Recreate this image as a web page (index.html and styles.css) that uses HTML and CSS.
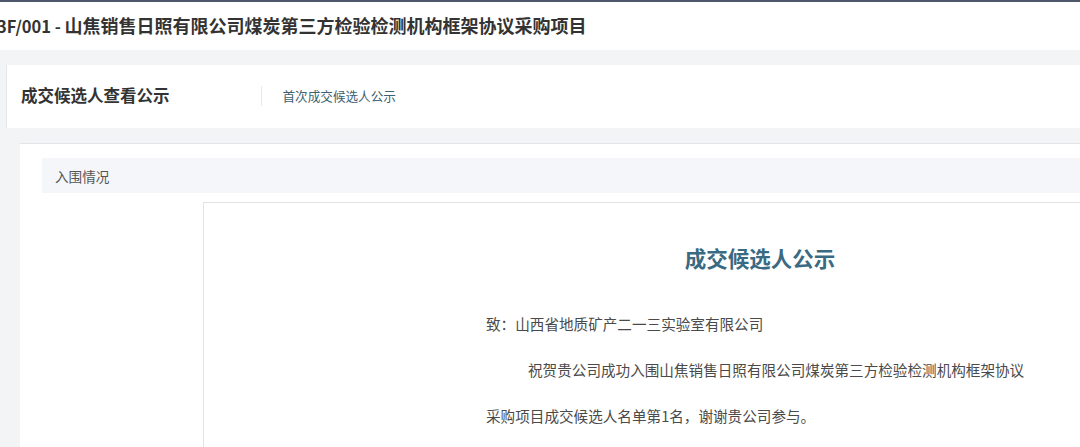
FILE: index.html
```html
<!DOCTYPE html>
<html lang="zh-CN">
    <head>
        <meta charset="UTF-8" />
        <meta name="viewport" content="width=device-width, initial-scale=1.0" />
        <title>成交候选人查看公示</title>
        <link rel="stylesheet" href="styles.css">
    </head>
    <body>
        <div class="topbar"></div>
        <div class="page-title">
            <span class="code">3F/001 - </span>山焦销售日照有限公司煤炭第三方检验检测机构框架协议采购项目
        </div>

        <div class="main">
            <div class="card">
                <h2>成交候选人查看公示</h2>
                <span class="divider"></span>
                <a class="tab" href="#">首次成交候选人公示</a>
            </div>

            <div class="content">
                <div class="section-bar">入围情况</div>
                <div class="notice">
                    <div class="notice-body">
                        <h3>成交候选人公示</h3>
                        <p>致：山西省地质矿产二一三实验室有限公司</p>
                        <p class="indent">祝贺贵公司成功入围山焦销售日照有限公司煤炭第三方检验检测机构框架协议采购项目成交候选人名单第1名，谢谢贵公司参与。</p>
                    </div>
                </div>
            </div>
        </div>
    </body>
</html>
```

FILE: styles.css
```css
* {
    margin: 0;
    padding: 0;
    box-sizing: border-box;
}
html,
body {
    height: 100%;
    overflow: hidden;
}
body {
    font-family: "Noto Sans CJK SC", "Noto Sans", sans-serif;
    background: #eef0f3;
    color: #333;
}

.topbar {
    height: 2px;
    background: #4e5769;
}

.page-title {
    height: 48px;
    line-height: 47px;
    background: white;
    font-size: 18px;
    font-weight: bold;
    color: #333;
    white-space: nowrap;
    margin-left: -3px;
}
.page-title .code {
    font-size: 16.5px;
}

.main {
    padding-top: 15px;
    padding-left: 6px;
    background: #f3f4f6;
}

.card {
    height: 63px;
    display: flex;
    align-items: center;
    background: white;
    border-left: 1px solid #e4e6e9;
    padding-left: 14px;
    padding-bottom: 3px;
}
.card h2 {
    font-size: 16.5px;
    font-weight: bold;
    color: #333;
    margin-right: 91px;
}
.divider {
    width: 1px;
    height: 20px;
    background: #e6e8eb;
    margin-top: 1px;
    margin-right: 21px;
}
.tab {
    font-size: 12.6px;
    color: #3b6272;
    text-decoration: none;
    margin-top: 1px;
}

.content {
    margin-top: 15px;
    margin-left: 14px;
    border-top: 1px solid #e3e5e9;
    background: white;
    padding: 14px 0 0 22px;
    height: 400px;
}

.section-bar {
    height: 35px;
    padding: 8px 0 0 13px;
    background: #f5f6f9;
    font-size: 13.6px;
    line-height: 20px;
    color: #555;
}

.notice {
    margin-top: 9px;
    margin-left: 161px;
    width: 1114px;
    height: 300px;
    border: 1px solid #e2e3e5;
    background: white;
}
.notice-body {
    width: 548px;
    margin: 0 auto;
    padding-top: 40px;
}
.notice h3 {
    text-align: center;
    font-size: 21.5px;
    font-weight: bold;
    line-height: 30px;
    color: #3a6a82;
    margin-bottom: 28px;
}
.notice p {
    font-size: 14.6px;
    line-height: 46px;
    color: #4a4a4a;
}
.notice p.indent {
    text-indent: 42px;
}
```
